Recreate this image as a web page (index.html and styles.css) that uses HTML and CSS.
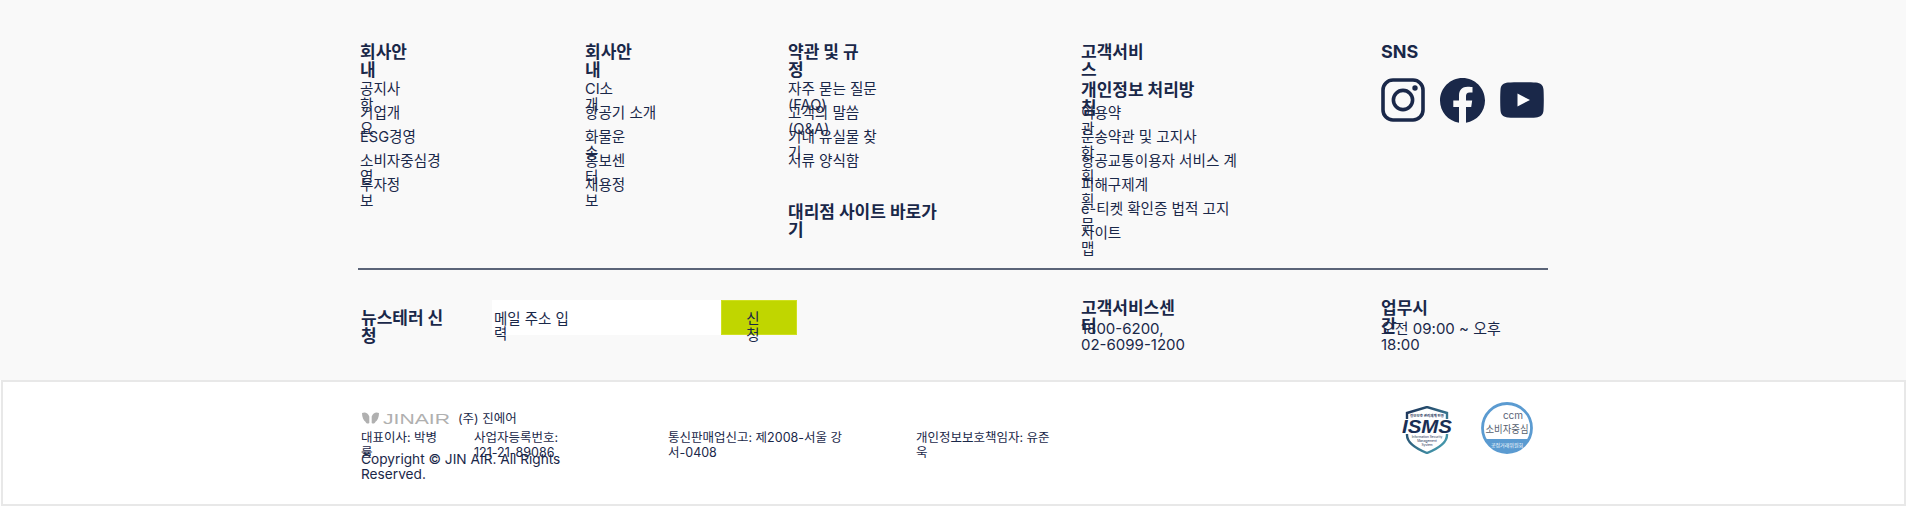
FILE: index.html
```html
<!DOCTYPE html>
<html lang="ko">
<head>
  <meta charset="UTF-8" />
  <meta name="viewport" content="width=device-width, initial-scale=1.0" />
  <title>JIN AIR Footer</title>
  <link rel="stylesheet" href="styles.css">
</head>
<body>
  <footer>
    <section class="top">
      <div class="wrap">
        <nav class="menu">
          <div class="col col-1">
            <h3 class="title">회사안<br>내</h3>
            <ul class="links">
              <li>공지사<br>항</li>
              <li>기업개<br>요</li>
              <li>ESG경영</li>
              <li>소비자중심경<br>영</li>
              <li>투자정<br>보</li>
            </ul>
          </div>
          <div class="col col-2">
            <h3 class="title">회사안<br>내</h3>
            <ul class="links">
              <li>CI소<br>개</li>
              <li>항공기 소개</li>
              <li>화물운<br>송</li>
              <li>홍보센<br>터</li>
              <li>채용정<br>보</li>
            </ul>
          </div>
          <div class="col col-3">
            <h3 class="title">약관 및 규<br>정</h3>
            <ul class="links">
              <li>자주 묻는 질문<br>(FAQ)</li>
              <li>고객의 말씀<br>(Q&amp;A)</li>
              <li>기내 유실물 찾<br>기</li>
              <li>서류 양식함</li>
            </ul>
            <h3 class="title title-agency">대리점 사이트 바로가<br>기</h3>
          </div>
          <div class="col col-4">
            <h3 class="title title-first">고객서비<br>스</h3>
            <h3 class="title title-short">개인정보 처리방<br>침</h3>
            <ul class="links">
              <li>이용약<br>관</li>
              <li>운송약관 및 고지사<br>항</li>
              <li>항공교통이용자 서비스 계<br>획</li>
              <li>피해구제계<br>획</li>
              <li>e-티켓 확인증 법적 고지<br>문</li>
              <li>사이트<br>맵</li>
            </ul>
          </div>
          <div class="col col-5">
            <h3 class="title title-sns">SNS</h3>
            <div class="sns">
              <svg class="ico-insta" viewBox="0 0 44 44" width="44" height="44">
                <rect x="2" y="2" width="40" height="40" rx="10" fill="none" stroke="#1a2849" stroke-width="3.6"/>
                <circle cx="22" cy="22" r="9.6" fill="none" stroke="#1a2849" stroke-width="3.6"/>
                <circle cx="34" cy="10" r="2.7" fill="#1a2849"/>
              </svg>
              <svg class="ico-fb" viewBox="0 0 45 45" width="45" height="45">
                <path fill="#1a2849" d="M45 22.5C45 10.1 34.9 0 22.5 0S0 10.1 0 22.5c0 11.2 8.2 20.5 19 22.2V29h-5.700v-6.500H19v-5c0-5.600 3.400-8.800 8.500-8.800 2.500 0 5 .4 5 .4v5.500h-2.800c-2.800 0-3.700 1.700-3.700 3.500v4.400h6.200l-1 6.500H26v15.700C36.800 43 45 33.700 45 22.500z"/>
              </svg>
              <svg class="ico-yt" viewBox="0 0 44 36" width="44" height="36">
                <path fill="#1a2849" d="M8 .6C14 .1 30 .1 36 .6c4.500.4 7.200 2.600 7.500 7 .4 6 .4 14.800 0 20.800-.3 4.400-3 6.600-7.500 7-6 .5-22 .5-28 0-4.500-.4-7.200-2.600-7.500-7-.4-6-.4-14.800 0-20.800.3-4.400 3-6.600 7.500-7z"/>
                <path fill="#fff" d="M17.500 11.500 30 18l-12.500 6.500z"/>
              </svg>
            </div>
          </div>
        </nav>

        <div class="info">
          <div class="news">
            <h3 class="title news-title">뉴스테러 신<br>청</h3>
            <div class="news-input">메일 주소 입<br>력</div>
            <div class="news-btn">신<br>청</div>
          </div>
          <div class="contact contact-cs">
            <h3 class="title title-short">고객서비스센<br>터</h3>
            <p>1800-6200,<br>02-6099-1200</p>
          </div>
          <div class="contact">
            <h3 class="title title-short">업무시<br>간</h3>
            <p>오전 09:00 ~ 오후<br>18:00</p>
          </div>
        </div>
      </div>
    </section>

    <section class="bottom">
      <div class="wrap bottom-inner">
        <div class="legal">
          <div class="brand">
            <svg class="logo" viewBox="0 0 88 16" width="88" height="16">
              <path fill="#b0b0b0" d="M0 3c3-1.500 6 0 7.300 3.500V13c-1.500 1-3.300.5-3.800-1.300C1.500 10.500 0 7 0 3zM17 3c-3-1.500-6 0-7.300 3.500V13c1.500 1 3.300.5 3.800-1.300C15.500 10.500 17 7 17 3z"/>
              <text class="logo-text" x="21" y="13.500" textLength="67" lengthAdjust="spacingAndGlyphs">JINAIR</text>
            </svg>
            <span>(주) 진에어</span>
          </div>
          <div class="legal-row">
            <span class="legal-1">대표이사: 박병<br>률</span>
            <span class="legal-2">사업자등록번호:<br>121-21-89086</span>
            <span class="legal-3">통신판매업신고: 제2008-서울 강<br>서-0408</span>
            <span class="legal-4">개인정보보호책임자: 유준<br>욱</span>
          </div>
          <p class="copyright">Copyright © JIN AIR. All Rights<br>Reserved.</p>
        </div>
        <div class="badges">
          <svg class="badge-isms" viewBox="0 0 50 48" width="50" height="48">
            <defs>
              <linearGradient id="shield" x1="0" y1="0" x2="1" y2="1">
                <stop offset="0" stop-color="#1a2f55"/>
                <stop offset="1" stop-color="#4aa6b8"/>
              </linearGradient>
            </defs>
            <path d="M25 1 45 7v22c0 8-10 14-20 18C15 43 5 37 5 29V7z" fill="#fff" stroke="url(#shield)" stroke-width="2.400"/>
            <text class="isms-top" x="25" y="11" text-anchor="middle">정보보호 관리체계 인증</text>
            <rect x="0" y="13" width="50" height="15" fill="#fff"/>
            <text class="isms-main" x="25" y="27" text-anchor="middle" textLength="50" lengthAdjust="spacingAndGlyphs">ISMS</text>
            <text class="isms-sub" x="25" y="32" text-anchor="middle">Information Security</text>
            <text class="isms-sub" x="25" y="36" text-anchor="middle">Management</text>
            <text class="isms-sub" x="25" y="40" text-anchor="middle">System</text>
          </svg>
          <svg class="badge-ccm" viewBox="0 0 52 52" width="52" height="52">
            <defs>
              <clipPath id="ccm-clip"><circle cx="26" cy="26" r="24.500"/></clipPath>
            </defs>
            <circle cx="26" cy="26" r="24.500" fill="#fff" stroke="#5b9bd1" stroke-width="2.800"/>
            <rect x="0" y="37" width="52" height="15" fill="#5b9bd1" clip-path="url(#ccm-clip)"/>
            <text class="ccm-mark" x="32" y="17" text-anchor="middle">ccm</text>
            <text class="ccm-main" x="26" y="31" text-anchor="middle" textLength="43" lengthAdjust="spacingAndGlyphs">소비자중심</text>
            <text class="ccm-foot" x="26" y="45" text-anchor="middle">공정거래위원회</text>
          </svg>
        </div>
      </div>
    </section>
  </footer>
</body>
</html>
```

FILE: styles.css
```css
* {
  box-sizing: border-box;
}
body {
  margin: 0;
  background: #fff;
  color: #1a2849;
  font-family: Inter, "Noto Sans CJK KR", sans-serif;
}
h3, p, ul {
  margin: 0;
  padding: 0;
}
.top {
  height: 380px;
  padding-top: 43px;
  background: #f9f9f9;
}
.wrap {
  width: 1190px;
  margin-left: 358px;
}
.menu {
  display: flex;
  height: 227px;
  border-bottom: 2px solid #5b6478;
}
.col {
  flex: none;
  padding-left: 2px;
}
.col-1 { width: 225px; }
.col-2 { width: 203px; }
.col-3 { width: 293px; }
.col-4 { width: 300px; }
.col-5 { width: 169px; }

.title {
  margin-bottom: 2px;
  font-size: 17px;
  line-height: 18px;
  font-weight: 700;
}
.title-first {
  margin-bottom: 0;
}
.title-short {
  height: 22px;
  margin-top: 2px;
}
.title-agency {
  margin-top: 26px;
}
.title-sns {
  margin-bottom: 17px;
  font-size: 18px;
}
.links {
  list-style: none;
}
.links li {
  height: 24px;
  font-size: 14.6px;
  line-height: 16px;
}
.sns {
  display: flex;
  align-items: center;
  gap: 15px;
  height: 44px;
}

.info {
  display: flex;
  padding-top: 30px;
}
.news {
  display: flex;
  width: 723px;
  padding-left: 3px;
}
.news-title {
  width: 131px;
  padding-top: 9px;
}
.news-input {
  width: 229px;
  height: 35px;
  padding: 11px 2px 0;
  background: #fff;
  font-size: 14.5px;
  line-height: 15px;
}
.news-btn {
  width: 76px;
  height: 35px;
  padding: 10px 12px 0 0;
  background: #c0d600;
  border: 1px solid #cfe020;
  text-align: center;
  font-size: 14.5px;
  line-height: 16px;
}
.contact {
  flex: 1;
  margin-top: -3px;
}
.contact-cs {
  flex: none;
  width: 300px;
}
.contact p {
  margin-top: -2px;
  font-size: 15px;
  line-height: 16px;
}

.bottom {
  height: 126px;
  border: 2px solid #e8e8e8;
  margin-left: 1px;
}
.bottom-inner {
  display: flex;
  justify-content: space-between;
  margin-left: 357px;
}
.legal {
  padding: 26px 0 0 1px;
  font-size: 12.5px;
  line-height: 15px;
}
.brand {
  display: flex;
  align-items: center;
  gap: 8px;
  height: 20px;
  margin-left: 1px;
}
.logo-text {
  fill: #b0b0b0;
  font-family: "Liberation Sans", sans-serif;
  font-size: 15px;
}
.legal-row {
  display: flex;
  margin-top: 2px;
  height: 22px;
}
.legal-1 { width: 113px; }
.legal-2 { width: 194px; }
.legal-3 { width: 248px; }
.copyright {
  margin-top: 0;
  font-size: 13.7px;
  line-height: 15px;
}
.badges {
  display: flex;
  align-items: flex-end;
  gap: 29px;
  height: 72px;
  padding-right: 17px;
}
.isms-top {
  fill: #1a2f55;
  font-size: 3.500px;
  font-weight: 700;
}
.isms-main {
  fill: #1a2f55;
  font-family: "Liberation Sans", sans-serif;
  font-size: 19px;
  font-weight: 700;
  font-style: italic;
}
.isms-sub {
  fill: #1a2f55;
  font-size: 3.200px;
}
.ccm-mark {
  fill: #5b6478;
  font-size: 10px;
}
.ccm-main {
  fill: #555e6e;
  font-size: 10.500px;
}
.ccm-foot {
  fill: #fff;
  font-size: 5px;
}
```
